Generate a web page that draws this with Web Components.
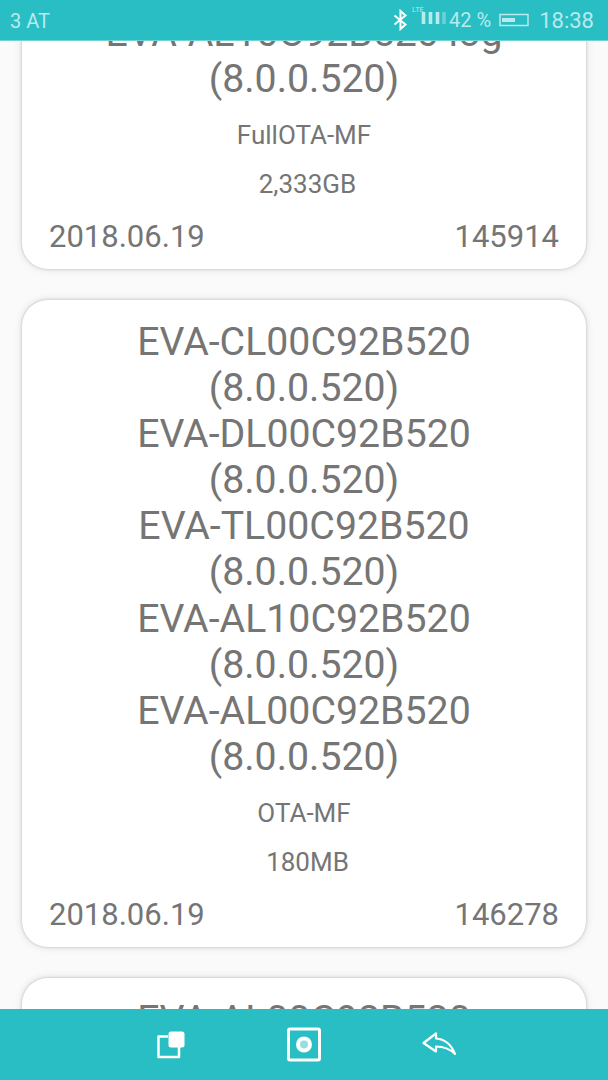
<!DOCTYPE html>
<html lang="en"><head><meta charset="utf-8"><title>Firmware list</title>
<style>body{margin:0;font-family:Roboto,sans-serif;background:#fafafa}</style></head><body>
<firmware-app></firmware-app>
<script>
const define=(name,html)=>customElements.define(name,class extends HTMLElement{
 constructor(){super();this.attachShadow({mode:'open'}).innerHTML=html;}
});
define('status-bar',`<style>
:host{display:flex;align-items:center;height:40px;flex:none;background:#28bec4;border-bottom:1px solid #6fd3d7;margin-bottom:-1px;color:#b9eaec;padding:0 14px 0 10px;font-size:20px;line-height:24px;position:relative;z-index:2}
.carrier{margin-right:auto;padding-top:2px}
svg{display:block;flex:none}
.signal{position:relative;width:35px;height:40px;margin-left:3px}
.lte{position:absolute;left:0;top:5px;font-size:7.5px;line-height:9px}
.pct{margin-left:2px}
.battery{margin:0 10px 0 8px}
.time{font-size:22px;padding-top:2px}
</style>
<span class="carrier">3 AT</span>
<svg width="16" height="24" viewBox="0 0 16 24"><path d="M1.500 7.500L12.500 16.500L7.500 21V3L12.500 7.500L1.500 16.500" fill="none" stroke="#fff" stroke-width="2"/></svg>
<span class="signal"><span class="lte">LTE</span><svg width="35" height="40"><path d="M11.500 12V24M18.500 12V24M25.500 12V24" stroke="#b9eaec" stroke-width="3.600"/><path d="M32 12V24" stroke="#6bd1d5" stroke-width="3.600"/></svg></span>
<span class="pct">42 %</span>
<svg class="battery" width="30" height="14"><rect x="1" y="1.500" width="28" height="11" fill="none" stroke="#b9eaec" stroke-width="1.500"/><rect x="3" y="5" width="13" height="4" fill="#b9eaec"/></svg>
<span class="time">18:38</span>`);
define('firmware-card',`<style>
:host{display:flex;flex-direction:column;flex:none;box-sizing:border-box;background:#fff;border-radius:26px;margin:0 22px;padding:19px 27px 14px;box-shadow:0 0 3px #0003,0 0 8px #00000020;color:#757575;text-align:center}
.title{font-size:39.25px;line-height:46.15px;white-space:nowrap}
.type{font-size:26px;line-height:30px;margin-top:18px}
.size{font-size:26px;line-height:30px;margin-top:19px;padding-left:7px}
.meta{display:flex;justify-content:space-between;font-size:31px;line-height:36px;margin-top:20px}
</style>
<div class="title"><slot name="title"></slot></div>
<div class="type"><slot name="type"></slot></div>
<div class="size"><slot name="size"></slot></div>
<div class="meta"><slot name="date"></slot><slot name="id"></slot></div>`);
define('nav-bar',`<style>
:host{display:flex;height:71px;flex:none;background:#28bec4;position:relative;z-index:2;align-items:center;justify-content:center;gap:96px}
svg{display:block}
</style>
<svg width="40" height="40" viewBox="0 0 40 40"><path d="M20 11.500H10.500V32H31V22" fill="none" stroke="#fff" stroke-width="2.500" stroke-linejoin="round"/><rect x="20.500" y="6.500" width="16" height="16" rx="2.500" fill="#fff"/></svg>
<svg width="40" height="40" viewBox="0 0 40 40"><rect x="4.500" y="4" width="31" height="31" rx="1.500" fill="none" stroke="#fff" stroke-width="3"/><circle cx="20" cy="19.500" r="6" fill="#93dfe1" stroke="#fff" stroke-width="4"/></svg>
<svg width="40" height="40" viewBox="0 0 40 40"><path d="M3.500 18L16 8.500V13.500C25 14 31 19 35 29C29.500 23.500 24 21.500 16 21.500V26.500Z" fill="none" stroke="#fff" stroke-width="2.200" stroke-linejoin="round"/></svg>`);
define('firmware-app',`<style>
:host{display:flex;flex-direction:column;width:608px;height:1080px;overflow:hidden}
main{flex:1;min-height:0;overflow:hidden;display:flex;flex-direction:column;gap:30.500px}
.first{margin-top:-49.200px}
</style>
<status-bar></status-bar>
<main>
<firmware-card class="first"><div slot="title">EVA-AL10C92B520 log<br>(8.0.0.520)</div><span slot="type">FullOTA-MF</span><span slot="size">2,333GB</span><span slot="date">2018.06.19</span><span slot="id">145914</span></firmware-card>
<firmware-card><div slot="title">EVA-CL00C92B520<br>(8.0.0.520)<br>EVA-DL00C92B520<br>(8.0.0.520)<br>EVA-TL00C92B520<br>(8.0.0.520)<br>EVA-AL10C92B520<br>(8.0.0.520)<br>EVA-AL00C92B520<br>(8.0.0.520)</div><span slot="type">OTA-MF</span><span slot="size">180MB</span><span slot="date">2018.06.19</span><span slot="id">146278</span></firmware-card>
<firmware-card><div slot="title">EVA-AL00C92B520</div></firmware-card>
</main>
<nav-bar></nav-bar>`);
</script></body></html>
